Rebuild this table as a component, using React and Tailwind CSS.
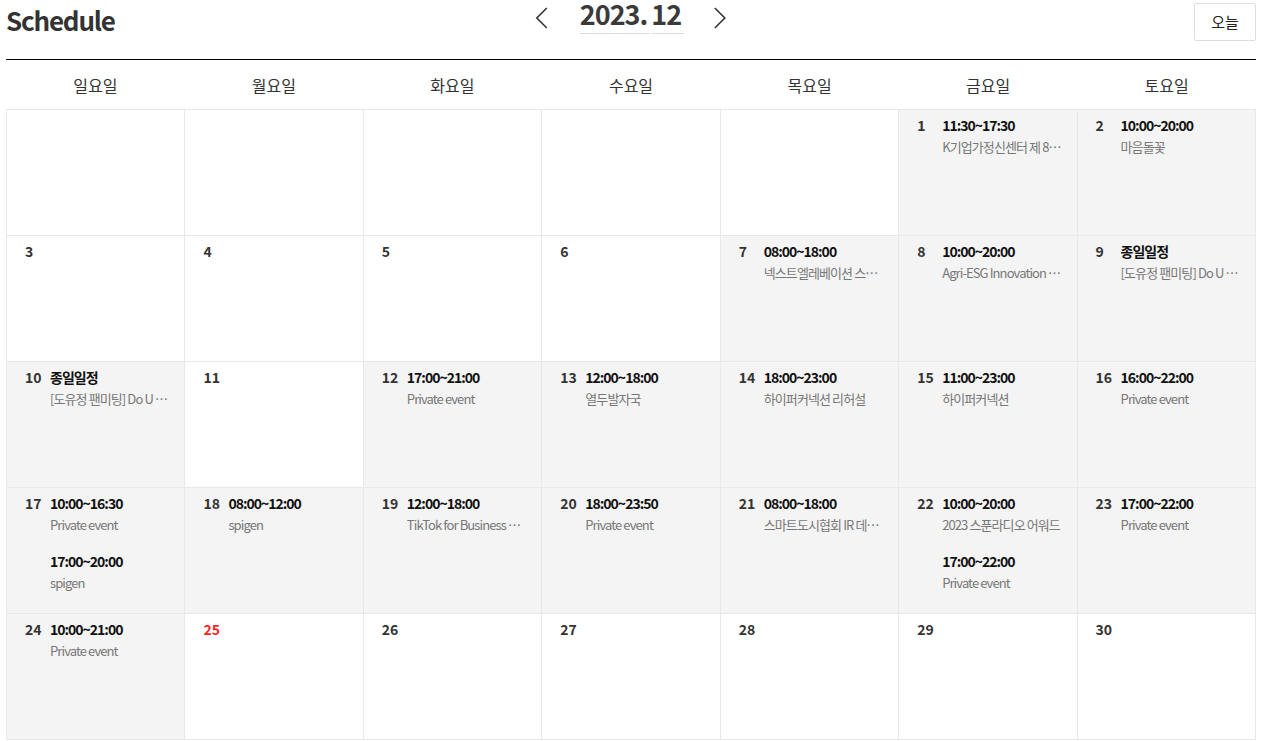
import React from 'react';

// Schedule: monthly calendar with event cells
const FONT = { fontFamily: '"Noto Sans CJK KR", "Noto Sans", sans-serif' };

const WEEKDAYS = ['일요일', '월요일', '화요일', '수요일', '목요일', '금요일', '토요일'];

const PRIVATE = 'Private event';
const FAN = '[도유정 팬미팅] Do U Know';

const WEEKS = [
  [
    null, null, null, null, null,
    { d: 1, ev: [['11:30~17:30', 'K기업가정신센터 제 8기 수료식']] },
    { d: 2, ev: [['10:00~20:00', '마음돌꽃']] },
  ],
  [
    { d: 3 }, { d: 4 }, { d: 5 }, { d: 6 },
    { d: 7, ev: [['08:00~18:00', '넥스트엘레베이션 스타트업 데모데이']] },
    { d: 8, ev: [['10:00~20:00', 'Agri-ESG Innovation Forum']] },
    { d: 9, ev: [['종일일정', FAN]] },
  ],
  [
    { d: 10, ev: [['종일일정', FAN]] },
    { d: 11 },
    { d: 12, ev: [['17:00~21:00', PRIVATE]] },
    { d: 13, ev: [['12:00~18:00', '열두발자국']] },
    { d: 14, ev: [['18:00~23:00', '하이퍼커넥션 리허설']] },
    { d: 15, ev: [['11:00~23:00', '하이퍼커넥션']] },
    { d: 16, ev: [['16:00~22:00', PRIVATE]] },
  ],
  [
    { d: 17, ev: [['10:00~16:30', PRIVATE], ['17:00~20:00', 'spigen']] },
    { d: 18, ev: [['08:00~12:00', 'spigen']] },
    { d: 19, ev: [['12:00~18:00', 'TikTok for Business 세미나']] },
    { d: 20, ev: [['18:00~23:50', PRIVATE]] },
    { d: 21, ev: [['08:00~18:00', '스마트도시협회 IR 데모데이']] },
    { d: 22, ev: [['10:00~20:00', '2023 스푼라디오 어워드'], ['17:00~22:00', PRIVATE]] },
    { d: 23, ev: [['17:00~22:00', PRIVATE]] },
  ],
  [
    { d: 24, ev: [['10:00~21:00', PRIVATE]] },
    { d: 25, holiday: true },
    { d: 26 }, { d: 27 }, { d: 28 }, { d: 29 }, { d: 30 },
  ],
];

const Chevron = ({ dir }) => (
  <svg width="14" height="24" viewBox="0 0 14 24" fill="none" stroke="#333" strokeWidth="1.6">
    {dir === 'left' ? <polyline points="12,2 2,12 12,22" /> : <polyline points="2,2 12,12 2,22" />}
  </svg>
);

const DayCell = ({ cell }) => {
  const hasEv = cell && cell.ev && cell.ev.length > 0;
  return (
    <div className={`h-[126px] border-r border-b border-[#e8e8e8] pl-[18px] pr-[10px] pt-[5px] ${hasEv ? 'bg-[#f4f4f4]' : 'bg-white'}`}>
      {cell && (
        <div className="flex">
          <span className={`w-[25px] shrink-0 text-[14px] leading-[20px] font-bold ${cell.holiday ? 'text-[#ff2323]' : 'text-[#333]'}`}>
            {cell.d}
          </span>
          {hasEv && (
            <div className="flex flex-col gap-[16px] min-w-0 flex-1">
              {cell.ev.map(([time, name], i) => (
                <div key={i} className="min-w-0">
                  <div className="text-[14px] leading-[20px] font-bold text-[#111] tracking-[-1px]">{time}</div>
                  <div className="mt-[2px] text-[13px] leading-[20px] text-[#777] tracking-[-0.9px] truncate">{name}</div>
                </div>
              ))}
            </div>
          )}
        </div>
      )}
    </div>
  );
};

export default function App() {
  return (
    <div className="bg-white min-h-[741px] pl-[6px] pr-[10px]" style={FONT}>
      <div className="relative flex items-start justify-between h-[59px]">
        <h1 className="text-[26px] leading-[40px] font-bold text-[#333] tracking-[-1.2px]">Schedule</h1>
        <div className="absolute left-1/2 top-0 -translate-x-1/2 flex items-start">
          <button type="button" className="mt-[6px] mr-[31px]"><Chevron dir="left" /></button>
          <div className="flex items-start gap-[2px] text-[27px] leading-[28px] font-bold text-[#3a3a3a] tracking-[-1px] whitespace-nowrap">
            <span className="pb-[5px] pr-[2px] border-b border-[#ddd]">2023.</span>
            <span className="pb-[5px] pr-[3px] border-b border-[#ddd]">12</span>
          </div>
          <button type="button" className="mt-[6px] ml-[29px]"><Chevron dir="right" /></button>
        </div>
        <button type="button" className="mt-[3px] w-[62px] h-[38px] border border-[#ddd] rounded-[2px] text-[15px] text-[#222] bg-white">
          오늘
        </button>
      </div>
      <div className="border-t border-black grid grid-cols-7 h-[50px] items-center">
        {WEEKDAYS.map(w => (
          <div key={w} className="text-center text-[16px] text-[#333]">{w}</div>
        ))}
      </div>
      <div className="grid grid-cols-7 border-l border-t border-[#e8e8e8]">
        {WEEKS.flat().map((cell, i) => (
          <DayCell key={i} cell={cell} />
        ))}
      </div>
    </div>
  );
}
